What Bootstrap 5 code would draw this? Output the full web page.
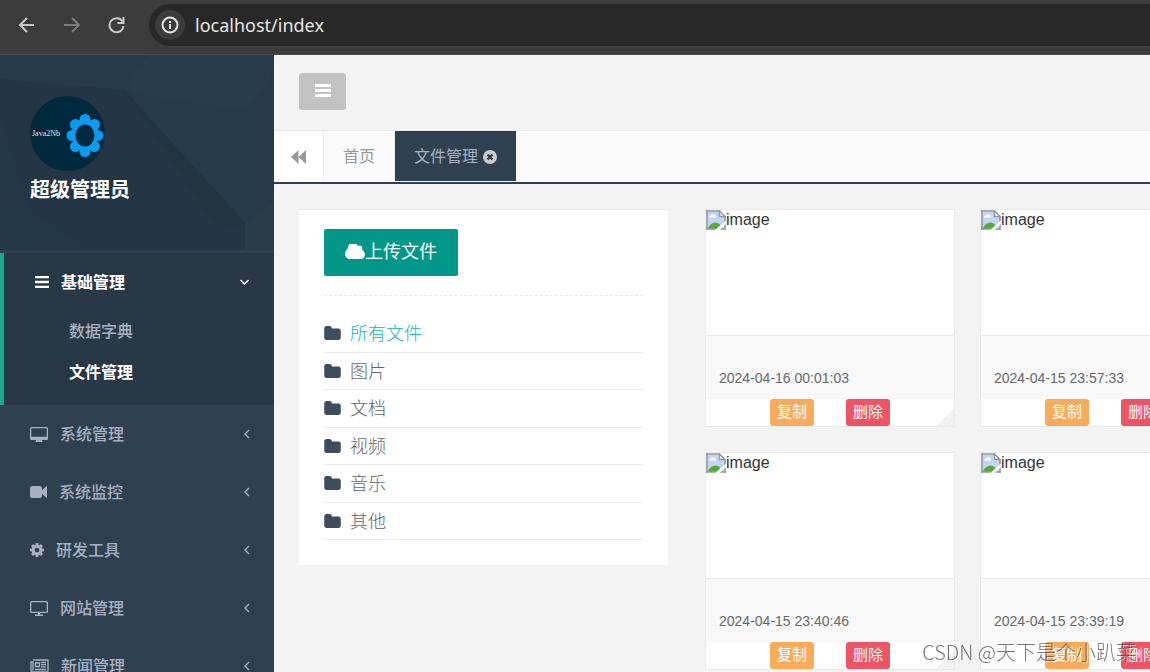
<!DOCTYPE html>
<html lang="zh-CN">
<head>
<meta charset="utf-8">
<meta name="viewport" content="width=device-width, initial-scale=1">
<title>文件管理</title>
<link href="https://cdn.jsdelivr.net/npm/bootstrap@5.3.0/dist/css/bootstrap.min.css" rel="stylesheet">
<style>
  :root { --navy: #2f4050; --line: #e7eaec; --page: #f3f3f4; }
  body { font-family: "Liberation Sans", "Noto Sans CJK SC", sans-serif; font-size: 16px; line-height: 24px; color: #333; background: var(--page); }
  a { text-decoration: none; }
  svg { flex: none; display: block; }

  /* browser toolbar */
  .toolbar { height: 55px; background: #3c3c3c; border-bottom: 1px solid #4a4a4a; padding: 4px 0 8px 18px; }
  .tool-btn { width: 18px; height: 18px; padding: 0; border: 0; background: none; color: #c7c7c7; margin-right: 27px; }
  .tool-btn:disabled { color: #7c7c7c; }
  .address { background: #282828; border-radius: 21px 0 0 21px; margin-left: -4px; padding-left: 6px; }
  .site-info { width: 30px; height: 30px; padding: 0; border: 0; border-radius: 50%; background: #3c3c3c; color: #e3e3e3; }
  .address input { border: 0; background: none; color: #e6e6e6; font: 18px/24px "Noto Sans", sans-serif; padding: 0 10px; outline: 0; }

  /* sidebar */
  .side { width: 274px; background: var(--navy); flex: none; }
  .profile { height: 195px; background: #243645; padding: 41px 30px 0; margin-bottom: 3px; }
  .facets { position: absolute; inset: 0; width: 100%; height: 100%; }
  .profile-name { font-size: 20px; line-height: 38px; font-weight: 700; color: #fff; }
  .side-link { height: 58px; padding: 0 24px 0 30px; gap: 12px; color: #a7b1c2; font-weight: 500; }
  .side-link span { padding-top: 2px; }
  .side-link .arrow { margin-left: auto; }
  .open-group { background: #293846; border-left: 4px solid #19aa8d; padding-bottom: 12px; }
  .open-group .side-link { color: #fff; font-weight: 700; }
  .sub-link { display: block; height: 41px; line-height: 41px; padding-left: 65px; color: #a7b1c2; font-weight: 500; }
  .sub-link.current { color: #fff; font-weight: 700; }

  /* header and tabs */
  .top-strip { height: 76px; padding: 18px 25px; border-bottom: 1px solid var(--line); }
  .menu-toggle { width: 47px; height: 37px; background: #c2c2c2; color: #fff; border: 0; border-radius: 3px; padding: 0 0 2px; }
  .tab-strip { height: 53px; background: #fafafa; border-bottom: 2px solid var(--navy); padding-bottom: 1px; }
  .tab-item { color: #999; padding: 2px 19px 0; border: 0; border-right: 1px solid #eee; background: none; gap: 5px; }
  .tab-scroll { width: 50px; padding: 2px 0 0; background: #fff; }
  .tab-item.current { background: var(--navy); color: #a7b1c2; border: 0; }

  /* content */
  .content { padding: 25px 0 0 25px; gap: 37px; }
  .folders { width: 369px; flex: none; background: #fff; border-top: 1px solid var(--line); padding: 19px 25px 25px; }
  .upload { width: 134px; height: 47px; background: #009688; color: #fff; border: 0; border-radius: 2px; font-size: 18px; padding: 0 0 2px; }
  .dash { border-top: 1px dashed var(--line); margin: 19px 0; }
  .folder-list { height: 225px; }
  .folder-list li { border-bottom: 1px solid var(--line); flex: 1 1 0; }
  .folder-list a { color: #666; font-size: 18px; font-weight: 300; gap: 9px; height: 100%; }
  .folder-list span { padding-top: 2px; }
  .folder-list a.current { color: #1ab3b3; }
  .folder-list svg { color: #3d4d5d; }
  .files { gap: 25px; }
  .file-row { gap: 25px; }
  .file { width: 250px; flex: none; background: #fff; border: 1px solid var(--line); }
  .preview { height: 125px; line-height: 20px; }
  .meta { height: 64px; border-top: 1px solid var(--line); background: #f8f8f8; font-size: 14px; line-height: 20px; color: #676a6c; padding: 0 13px 11px; }
  .acts { gap: 32px; background: linear-gradient(135deg, transparent 50%, #f1f1f1 50%) right bottom / 18px 18px no-repeat; }
  .act { width: 44px; height: 27px; border: 0; border-radius: 3px; color: #fff; font-size: 15px; line-height: 24px; padding: 0 0 1px; }
  .copy { background: #f8ac59; }
  .del { background: #ed5565; }
  .watermark { position: fixed; right: 14px; bottom: 6px; font: 20px/28px "Noto Sans CJK SC", sans-serif; font-weight: 300; color: rgba(80, 80, 80, .8); text-shadow: 1px 1px 0 rgba(255, 255, 255, .6); pointer-events: none; }
</style>
</head>
<body class="vh-100 overflow-hidden d-flex flex-column">

<svg width="0" height="0" class="position-absolute" aria-hidden="true">
  <symbol id="i-folder" viewBox="0 128 1664 1408"><path fill="currentColor" d="M1664 608v704q0 92-66 158t-158 66h-1216q-92 0-158-66t-66-158v-960q0-92 66-158t158-66h320q92 0 158 66t66 158v32h672q92 0 158 66t66 158z"/></symbol>
  <symbol id="i-left" viewBox="0 0 6 10"><path d="M5 1L1 5l4 4" fill="none" stroke="currentColor" stroke-width="1.4"/></symbol>
  <symbol id="i-broken" viewBox="0 0 20 20">
    <path d="M1 1h12.500L19 6.500V19H1z" fill="#c3d5f7"/>
    <path d="M3 7.500q0-2 2-2 1-2 3-1 2 .5 2 3z" fill="#fff"/>
    <path d="M1.500 19q3-6.500 8-6.500 3 0 5 2.500l-4 4z" fill="#55ab2f"/>
    <path d="M1 0v20M0 1h13.500M0 19h20M19 6v14" stroke="#979a9c" stroke-width="1.600" fill="none"/>
    <path d="M13.500 1v5.500H19z" fill="#fff" stroke="#979a9c" stroke-width="1.500"/>
    <path d="M20 10.500V14l-6.500 6H9.500z" fill="#fff"/>
  </symbol>
</svg>

<header class="toolbar d-flex flex-shrink-0">
  <div class="d-flex align-items-center">
    <button class="tool-btn" aria-label="后退"><svg width="18" height="18" viewBox="0 0 18 18" fill="none" stroke="currentColor" stroke-width="2"><path d="M16 9H2.500M9 2L2 9l7 7"/></svg></button>
    <button class="tool-btn" aria-label="前进" disabled><svg width="18" height="18" viewBox="0 0 18 18" fill="none" stroke="currentColor" stroke-width="2"><path d="M1 9h14.500M9 2l7 7-7 7"/></svg></button>
    <button class="tool-btn" aria-label="刷新"><svg width="18" height="18" viewBox="0 0 18 18" fill="none" stroke="currentColor" stroke-width="2"><path d="M14.500 5.500A7 7 0 1 0 15.500 10M15.500 1v6h-6"/></svg></button>
  </div>
  <div class="address d-flex align-items-center flex-grow-1">
    <button class="site-info d-flex align-items-center justify-content-center" aria-label="网站信息"><svg width="18" height="18" viewBox="0 0 18 18"><circle cx="9" cy="9" r="7.500" fill="none" stroke="currentColor" stroke-width="2"/><path d="M8 8h2v5H8zM8 5h2v2H8z" fill="currentColor"/></svg></button>
    <input type="text" class="flex-grow-1" value="localhost/index" aria-label="地址">
  </div>
</header>

<div class="d-flex flex-grow-1 overflow-hidden">
  <nav class="side overflow-hidden">
    <div class="profile position-relative">
      <svg class="facets" viewBox="0 0 274 195" preserveAspectRatio="none">
        <path d="M0 0h148l-24 35L0 24z" fill="#273a49"/>
        <path d="M148 0h126v145l-29 23L124 35z" fill="#263a49"/>
        <path d="M148 0h126v10q-10 40-40 46L124 35z" fill="#283c4b"/>
        <path d="M124 35l121 133-14 6-20-10z" fill="#223342"/>
        <path d="M274 145v50h-29v-27z" fill="#283c4a"/>
        <path d="M0 60l30 95-30 10zM30 155l60 40H0v-30z" fill="#243746"/>
      </svg>
      <div class="position-relative">
        <svg width="75" height="75" viewBox="0 0 75 75" role="img" aria-label="Java2Nb">
          <circle cx="37.500" cy="37.500" r="37.500" fill="#00293d"/>
          <g fill="#0c9aee">
            <ellipse cx="55" cy="39" rx="13.500" ry="16"/>
            <circle cx="55" cy="23.500" r="5.500"/><circle cx="55" cy="55.500" r="5.500"/>
            <circle cx="42" cy="39.500" r="5.500"/><circle cx="68" cy="39.500" r="5.500"/>
            <circle cx="45.500" cy="28.500" r="5.500"/><circle cx="64.500" cy="28.500" r="5.500"/>
            <circle cx="45.500" cy="50.500" r="5.500"/><circle cx="64.500" cy="50.500" r="5.500"/>
          </g>
          <ellipse cx="55" cy="39.500" rx="9.500" ry="11" fill="#00293d"/>
          <text x="2" y="40" font-family="Liberation Serif, serif" font-size="8" fill="#e3e8ea">Java2Nb</text>
        </svg>
        <div class="profile-name">超级管理员</div>
      </div>
    </div>
    <div class="open-group">
      <a href="#" class="side-link d-flex align-items-center"><svg width="15" height="12" viewBox="0 0 15 12"><path d="M1 1h14M1 6h14M1 11h14" stroke="currentColor" stroke-width="2.400"/></svg><span>基础管理</span><svg class="arrow" width="10" height="7" viewBox="0 0 10 7"><path d="M0.500 1l4 4 4-4" fill="none" stroke="currentColor" stroke-width="1.500"/></svg></a>
      <a href="#" class="sub-link">数据字典</a>
      <a href="#" class="sub-link current">文件管理</a>
    </div>
    <a href="#" class="side-link d-flex align-items-center"><svg width="18" height="15" viewBox="0 0 18 15"><path fill="currentColor" fill-rule="evenodd" d="M1.500 0h15Q18 0 18 1.500v10q0 1.500-1.500 1.500H12v1l1 1H5l1-1v-1H1.500Q0 13 0 11.500v-10Q0 0 1.500 0zM1.300 1.300v8.400h15.400V1.300z"/></svg><span>系统管理</span><svg class="arrow" width="6" height="10"><use href="#i-left"/></svg></a>
    <a href="#" class="side-link d-flex align-items-center"><svg width="17" height="12" viewBox="0 0 17 12"><path fill="currentColor" d="M2.500 0h7Q12 0 12 2.500v1.700L16 .4q1-.5 1 .4v10.400q0 .9-1 .4l-4-3.800v1.700Q12 12 9.500 12h-7Q0 12 0 9.500v-7Q0 0 2.500 0z"/></svg><span>系统监控</span><svg class="arrow" width="6" height="10"><use href="#i-left"/></svg></a>
    <a href="#" class="side-link d-flex align-items-center"><svg width="14" height="14" viewBox="128 128 1536 1536"><path fill="currentColor" d="M1152 896q0-106-75-181t-181-75-181 75-75 181 75 181 181 75 181-75 75-181zm512-109v222q0 12-8 23t-20 13l-185 28q-19 54-39 91 35 50 107 138 10 12 10 25t-9 23q-27 37-99 108t-94 71q-12 0-26-9l-138-108q-44 23-91 38-16 136-29 186-7 28-36 28h-222q-14 0-24.500-8.500t-11.500-21.500l-28-184q-49-16-90-37l-141 107q-10 9-25 9-14 0-25-11-126-114-165-168-7-10-7-23 0-12 8-23 15-21 51-66.500t54-70.500q-27-50-41-99l-183-27q-13-2-21-12.500t-8-23.500v-222q0-12 8-23t19-13l186-28q14-46 39-92-40-57-107-138-10-12-10-24 0-10 9-23 26-36 98.500-107.500t94.500-71.500q13 0 26 10l138 107q44-23 91-38 16-136 29-186 7-28 36-28h222q14 0 24.500 8.500t11.500 21.500l28 184q49 16 90 37l142-107q9-9 24-9 13 0 25 10 129 119 165 170 7 8 7 22 0 12-8 23-15 21-51 66.500t-54 70.500q26 50 41 98l183 28q13 2 21 12.500t8 23.500z"/></svg><span>研发工具</span><svg class="arrow" width="6" height="10"><use href="#i-left"/></svg></a>
    <a href="#" class="side-link d-flex align-items-center"><svg width="18" height="15" viewBox="0 0 18 15"><path fill="currentColor" fill-rule="evenodd" d="M1.500 0h15Q18 0 18 1.500v9q0 1.500-1.500 1.500H10v1.500h3V15H5v-1.500h3V12H1.500Q0 12 0 10.500v-9Q0 0 1.500 0zM1.300 1.300v9.400h15.400V1.300z"/></svg><span>网站管理</span><svg class="arrow" width="6" height="10"><use href="#i-left"/></svg></a>
    <a href="#" class="side-link d-flex align-items-center"><svg width="19" height="14" viewBox="0 0 19 14" fill="none" stroke="currentColor" stroke-width="1.300"><path d="M3 1h15v10.500q0 1.500-1.500 1.500h-14Q1 13 1 11.500V3h2v8.500"/><path d="M5.500 4h4v3.500h-4zM11 3.500h5M11 5.700h5M11 7.900h5M5 10.500h11"/></svg><span>新闻管理</span><svg class="arrow" width="6" height="10"><use href="#i-left"/></svg></a>
  </nav>

  <main class="flex-grow-1 overflow-hidden">
    <div class="top-strip">
      <button class="menu-toggle d-flex align-items-center justify-content-center" aria-label="菜单"><svg width="16" height="13" viewBox="0 0 16 13"><path d="M0 1.500h16M0 6.500h16M0 11.500h16" stroke="currentColor" stroke-width="3"/></svg></button>
    </div>
    <div class="tab-strip d-flex">
      <button class="tab-item tab-scroll d-flex align-items-center justify-content-center" aria-label="向左滚动"><svg width="15" height="14" viewBox="0 0 15 14"><path d="M7.500 0v14L0 7zM15 0v14L7.500 7z" fill="currentColor"/></svg></button>
      <a href="#" class="tab-item d-flex align-items-center">首页</a>
      <a href="#" class="tab-item current d-flex align-items-center">文件管理<svg width="14" height="14" viewBox="0 0 14 14"><circle cx="7" cy="7" r="7" fill="#ccc"/><path d="M4.500 4.500l5 5M9.500 4.500l-5 5" stroke="#2f4050" stroke-width="2.400"/></svg></a>
    </div>

    <div class="content d-flex align-items-start">
      <section class="folders">
        <button class="upload d-flex align-items-center justify-content-center"><svg width="20" height="15" viewBox="64 256 1920 1280" preserveAspectRatio="none"><path fill="currentColor" d="M1984 1152q0 159-112.500 271.500t-271.500 112.500h-1088q-185 0-316.500-131.500t-131.500-316.500q0-132 71-241.500t187-163.500q-2-28-2-43 0-212 150-362t362-150q158 0 286.500 88t187.500 230q70-62 166-62 106 0 181 75t75 181q0 75-41 138 129 30 213 134.500t84 239.500z"/></svg>上传文件</button>
        <div class="dash"></div>
        <ul class="folder-list list-unstyled d-flex flex-column mb-0">
          <li><a href="#" class="current d-flex align-items-center"><svg width="17" height="14"><use href="#i-folder"/></svg><span>所有文件</span></a></li>
          <li><a href="#" class="d-flex align-items-center"><svg width="17" height="14"><use href="#i-folder"/></svg><span>图片</span></a></li>
          <li><a href="#" class="d-flex align-items-center"><svg width="17" height="14"><use href="#i-folder"/></svg><span>文档</span></a></li>
          <li><a href="#" class="d-flex align-items-center"><svg width="17" height="14"><use href="#i-folder"/></svg><span>视频</span></a></li>
          <li><a href="#" class="d-flex align-items-center"><svg width="17" height="14"><use href="#i-folder"/></svg><span>音乐</span></a></li>
          <li><a href="#" class="d-flex align-items-center"><svg width="17" height="14"><use href="#i-folder"/></svg><span>其他</span></a></li>
        </ul>
      </section>

      <section class="files d-flex flex-column">
        <div class="file-row d-flex">
          <article class="file">
            <div class="preview d-flex align-items-start"><svg width="20" height="20"><use href="#i-broken"/></svg>image</div>
            <div class="meta d-flex align-items-end">2024-04-16 00:01:03</div>
            <div class="acts d-flex justify-content-center"><button class="act copy">复制</button><button class="act del">删除</button></div>
          </article>
          <article class="file">
            <div class="preview d-flex align-items-start"><svg width="20" height="20"><use href="#i-broken"/></svg>image</div>
            <div class="meta d-flex align-items-end">2024-04-15 23:57:33</div>
            <div class="acts d-flex justify-content-center"><button class="act copy">复制</button><button class="act del">删除</button></div>
          </article>
        </div>
        <div class="file-row d-flex">
          <article class="file">
            <div class="preview d-flex align-items-start"><svg width="20" height="20"><use href="#i-broken"/></svg>image</div>
            <div class="meta d-flex align-items-end">2024-04-15 23:40:46</div>
            <div class="acts d-flex justify-content-center"><button class="act copy">复制</button><button class="act del">删除</button></div>
          </article>
          <article class="file">
            <div class="preview d-flex align-items-start"><svg width="20" height="20"><use href="#i-broken"/></svg>image</div>
            <div class="meta d-flex align-items-end">2024-04-15 23:39:19</div>
            <div class="acts d-flex justify-content-center"><button class="act copy">复制</button><button class="act del">删除</button></div>
          </article>
        </div>
      </section>
    </div>
  </main>
</div>

<div class="watermark">CSDN @天下是个小趴菜</div>
<script src="https://cdn.jsdelivr.net/npm/bootstrap@5.3.0/dist/js/bootstrap.bundle.min.js"></script>
</body>
</html>
